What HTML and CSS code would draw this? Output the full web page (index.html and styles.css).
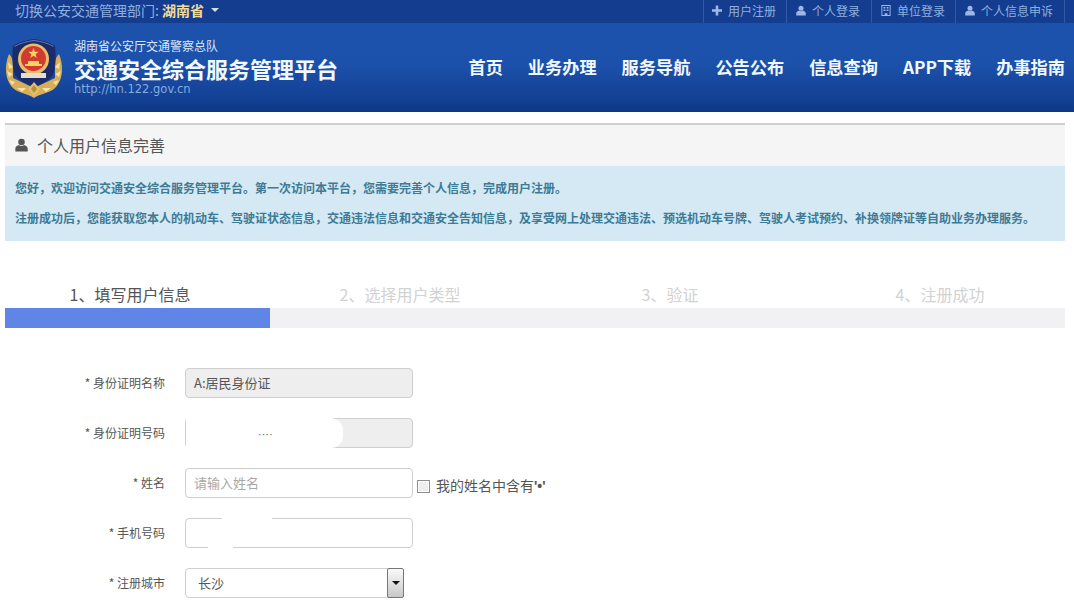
FILE: index.html
```html
<!DOCTYPE html>
<html lang="zh-CN">
<head>
<meta charset="utf-8">
<title>个人用户信息完善</title>
<link rel="stylesheet" href="styles.css">
</head>
<body>
<svg class="defs" width="0" height="0" aria-hidden="true">
  <symbol id="i-user" viewBox="0 0 12 12"><circle cx="6" cy="3.200" r="3"/><path d="M.3 12V9.300C.3 7.600 2 6.700 3.800 6.100 4.500 6.800 5.200 7 6 7s1.500-.2 2.200-.9C10 6.700 11.700 7.600 11.700 9.300V12z"/></symbol>
</svg>
<div class="topbar">
  <div class="dept">切换公安交通管理部门: <b class="dept-name">湖南省</b><span class="caret"></span></div>
  <ul class="toplinks">
    <li><svg class="ti" viewBox="0 0 10 10"><path d="M3.700 0h2.600v3.700H10v2.600H6.300V10H3.700V6.300H0V3.700h3.700z"/></svg>用户注册</li>
    <li><svg class="ti"><use href="#i-user"/></svg>个人登录</li>
    <li><svg class="ti" viewBox="0 0 10 12"><path fill-rule="evenodd" d="M0 0h10v12H0zM1 1v10h2.500V9h3v2H9V1zM2.300 2.200h2v1.500h-2zM5.700 2.200h2v1.500h-2zM2.300 5h2v1.500h-2zM5.700 5h2v1.500h-2z"/></svg>单位登录</li>
    <li><svg class="ti"><use href="#i-user"/></svg>个人信息申诉</li>
  </ul>
</div>
<header class="masthead">
  <div class="brand">
    <svg class="emblem" viewBox="0 0 58 60">
      <path d="M4 16C-1 28 0 42 8 50c5 5 13 5 21 10 8-5 16-5 21-10 8-8 9-22 4-34-3 3-4 6-4 10v14L29 50 8 40V26c0-4-1-7-4-10z" fill="#d8ae58"/>
      <path d="M3 24l5 5-4 2zM2 33l6 3-4 3zM4 42l6 2-3 3zM55 24l-5 5 4 2zM56 33l-6 3 4 3zM54 42l-6 2 3 3zM12 50l9 0-4 4zM46 50l-9 0 4 4z" fill="#f5e2a8"/>
      <path d="M29 1C21 2 14 4 8 8c-1 10-1 21 2 29 4 6 12 9 19 12 7-3 15-6 19-12 3-8 3-19 2-29-6-4-13-6-21-7z" fill="#1b2c6a"/>
      <path d="M29 2.500C22 3.500 15 5 9.500 8.500" fill="none" stroke="#6d78a6" stroke-width="1"/>
      <path d="M29 2.500C36 3.500 43 5 48.500 8.500" fill="none" stroke="#6d78a6" stroke-width="1"/>
      <circle cx="28.500" cy="21" r="15.500" fill="#e9bd6a"/>
      <circle cx="28.500" cy="20.500" r="12.500" fill="#d23a30"/>
      <path d="M28.500 10l1.300 3.700 3.900.1-3.100 2.400 1.100 3.700-3.200-2.200-3.200 2.200 1.100-3.700-3.100-2.400 3.900-.1z" fill="#f4d35e"/>
      <path d="M23 23h11v3H23zM20 26h17v2H20z" fill="#f4d35e"/>
      <path d="M16 35h25v5H16z" fill="#e9dfc8"/>
      <path d="M29 44l6 7-6 8-6-8z" fill="#e3be6c"/>
      <path d="M29 47l3 4-3 4-3-4z" fill="#b98f3e"/>
    </svg>
    <div class="brand-text">
      <div class="brand-sub">湖南省公安厅交通警察总队</div>
      <div class="brand-title">交通安全综合服务管理平台</div>
      <div class="brand-url">http://hn.122.gov.cn</div>
    </div>
  </div>
  <nav class="nav">
    <a>首页</a><a>业务办理</a><a>服务导航</a><a>公告公布</a><a>信息查询</a><a>APP下载</a><a>办事指南</a>
  </nav>
</header>
<main class="panel">
  <h1 class="panel-head"><svg class="head-icon"><use href="#i-user"/></svg>个人用户信息完善</h1>
  <div class="notice">
    <p>您好，欢迎访问交通安全综合服务管理平台。第一次访问本平台，您需要完善个人信息，完成用户注册。</p>
    <p>注册成功后，您能获取您本人的机动车、驾驶证状态信息，交通违法信息和交通安全告知信息，及享受网上处理交通违法、预选机动车号牌、驾驶人考试预约、补换领牌证等自助业务办理服务。</p>
  </div>
  <ol class="steps">
    <li class="step-on">1、填写用户信息</li>
    <li>2、选择用户类型</li>
    <li>3、验证</li>
    <li>4、注册成功</li>
  </ol>
  <div class="progress"><div class="progress-fill"></div></div>
  <form class="form">
    <div class="row">
      <label class="lab">* 身份证明名称</label>
      <div class="field field-off">A:居民身份证</div>
    </div>
    <div class="row">
      <label class="lab">* 身份证明号码</label>
      <div class="field field-off field-mask">
        <span class="mask mask-id"></span>
        <span class="dots">····</span>
      </div>
    </div>
    <div class="row">
      <label class="lab">* 姓名</label>
      <input class="field field-input" placeholder="请输入姓名">
      <label class="check"><span class="box"></span><span class="check-text">我的姓名中含有<span class="quote">'•'</span></span></label>
    </div>
    <div class="row">
      <label class="lab">* 手机号码</label>
      <div class="field field-mask">
        <span class="mask mask-top"></span>
        <span class="mask mask-bottom"></span>
      </div>
    </div>
    <div class="row">
      <label class="lab">* 注册城市</label>
      <div class="field field-select">长沙<span class="drop"><span class="drop-arrow"></span></span></div>
    </div>
  </form>
</main>
</body>
</html>
```
FILE: styles.css
```css
* { box-sizing: border-box; }
html, body { margin: 0; padding: 0; }
body {
  background: #fff;
  color: #555;
  font-family: "Noto Sans CJK SC", "Liberation Sans", sans-serif;
  font-size: 12px;
  overflow: hidden;
  height: 607px;
}
.defs { position: absolute; }

.topbar {
  height: 23px;
  background: #143d90;
  display: flex;
  justify-content: space-between;
  padding: 0 9px 0 15px;
  color: #8fb0de;
  line-height: 21px;
}
.dept { font-size: 14px; }
.dept-name { color: #f2dc9a; font-size: 14px; font-weight: 700; }
.caret {
  display: inline-block;
  margin-left: 7px;
  vertical-align: 4px;
  border: 4px solid transparent;
  border-top: 4px solid #cfe0f5;
  border-bottom: 0;
}
.toplinks { display: flex; list-style: none; margin: 0; padding: 0; border-right: 1px solid #2f5aa6; }
.toplinks li {
  display: flex;
  align-items: center;
  padding: 0 11px 3px 9px;
  border-left: 1px solid #2f5aa6;
  height: 23px;
  font-size: 12px;
  color: #8fb0de;
}
.toplinks li:first-child { padding-left: 8px; padding-right: 10px; }
.toplinks li:nth-child(3) { padding-right: 10px; }
.ti { width: 10px; height: 11px; fill: #9db9e2; margin-right: 6px; }

.masthead {
  height: 89px;
  background: linear-gradient(#1c52ad 0%, #1c51ab 45%, #123f92 88%, #0e3682 100%);
  display: flex;
  justify-content: space-between;
  padding: 0 9px 0 5px;
}
.brand { display: flex; padding-top: 15px; }
.emblem { width: 58px; height: 60px; flex: none; }
.brand-text { margin-left: 11px; margin-top: -1px; }
.brand-sub { color: #dbe8f8; font-size: 12px; line-height: 17px; }
.brand-title { color: #f2f8ff; font-size: 22px; font-weight: 700; line-height: 28px; }
.brand-url { color: #86abdf; font-family: "DejaVu Sans", sans-serif; font-size: 11.500px; line-height: 14px; }
.nav { display: flex; gap: 25px; align-items: center; margin-top: -2px; }
.nav a { color: #f0f8ff; font-size: 17.200px; font-weight: 700; }

.panel { margin: 11px 9px 0 5px; border-top: 2px solid #cfcfcf; }
.panel-head {
  margin: 0;
  height: 41px;
  background: #f5f5f5;
  display: flex;
  align-items: center;
  padding: 0 0 2px 10px;
  font-size: 16px;
  font-weight: 400;
  color: #555;
}
.head-icon { width: 13px; height: 14px; fill: #555; margin-right: 9px; }
.notice {
  background: #d5e9f4;
  color: #3d7a96;
  padding: 7px 10px 8px;
  font-weight: 700;
  font-size: 12px;
  line-height: 30px;
}
.notice p { margin: 0; white-space: nowrap; }

.steps {
  list-style: none;
  margin: 42px 0 0 -10px;
  padding: 0;
  display: grid;
  grid-template-columns: repeat(4, 270px);
  height: 25px;
  line-height: 23px;
  font-size: 16px;
  color: #d2d2d2;
  text-align: center;
}
.step-on { color: #555; }
.progress { height: 20px; background: #f1f1f3; }
.progress-fill { width: 25%; height: 100%; background: #5f85e6; }

.form { margin-top: 40px; display: flex; flex-direction: column; gap: 20px; }
.row { display: flex; align-items: center; height: 30px; }
.lab { width: 160px; text-align: right; color: #555; font-size: 12px; margin-right: 20px; padding-bottom: 2px; flex: none; }
.field {
  width: 228px;
  height: 30px;
  flex: none;
  border: 1px solid #cfcfcf;
  border-radius: 4px;
  padding: 0 8px;
  font: 13px/28px "Noto Sans CJK SC", "Liberation Sans", sans-serif;
  color: #555;
  background: #fff;
}
.field-off { background: #eeeeee; }
.field-input { padding-bottom: 2px; }
.field-input::placeholder { color: #a8a8a8; opacity: 1; }
.field-mask { position: relative; }
.mask { position: absolute; background: #fff; }
.mask-id { left: 0; top: -1px; bottom: -1px; width: 157px; border-radius: 0 12px 12px 0; }
.dots { position: absolute; left: 72px; top: 1px; font-family: "Liberation Sans", sans-serif; font-size: 11px; color: #555; }
.mask-top { left: 36px; top: -1px; width: 50px; height: 4px; }
.mask-bottom { left: 22px; bottom: -1px; width: 25px; height: 4px; }
.field-select { position: relative; width: 219px; padding-left: 12px; }
.drop {
  position: absolute;
  right: -1px;
  top: -1px;
  width: 17px;
  height: 30px;
  border: 1px solid #777;
  border-radius: 2px;
  background: linear-gradient(#fafafa, #c8c8c8);
  display: flex;
  align-items: center;
  justify-content: center;
}
.drop-arrow { border: 4px solid transparent; border-top: 4px solid #111; border-bottom: 0; }
.check { display: flex; align-items: center; margin: 6px 0 0 4px; font-size: 14px; color: #555; }
.check-text { padding-bottom: 3px; }
.quote { font-family: "Liberation Sans", sans-serif; font-weight: 700; }
.box { width: 13px; height: 13px; border: 1px solid #8e8e8e; background: #eee; margin-right: 6px; box-shadow: inset 0 0 0 1px #fff; }
```
